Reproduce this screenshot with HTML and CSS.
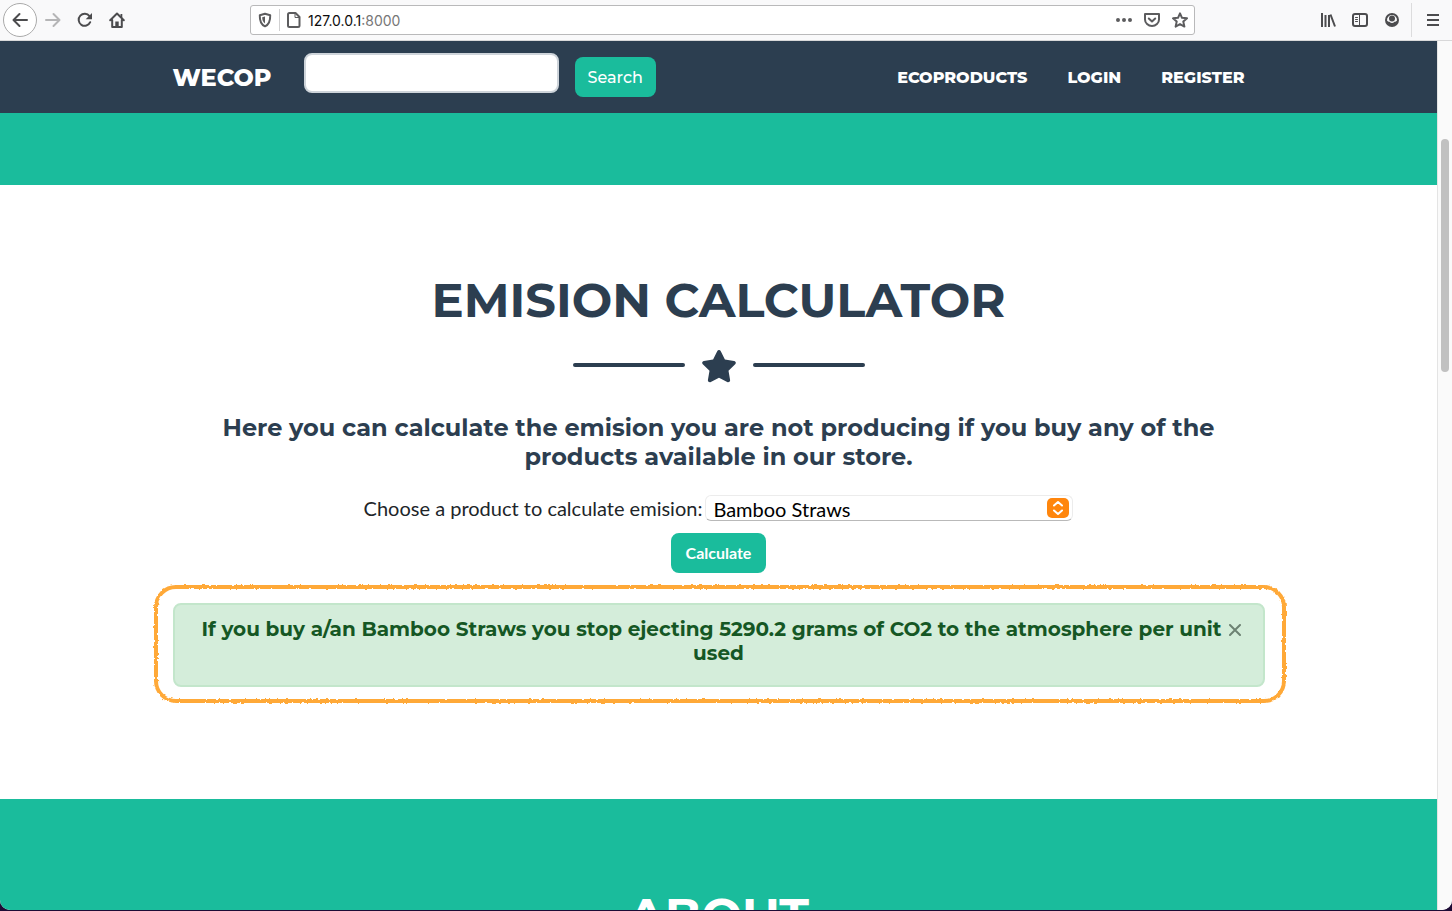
FILE: index.html
```
<!DOCTYPE html>
<html lang="en">
<head>
<meta charset="utf-8">
<meta name="viewport" content="width=device-width, initial-scale=1">
<title>WECOP</title>
<link rel="stylesheet" href="styles.css">
</head>
<body>
<div class="window">
  <header class="toolbar">
    <div class="toolbar-nav">
      <button class="tool tool-back" type="button" aria-label="Back"><svg viewBox="0 0 16 16"><path d="M15 8H2M7.500 2 1.500 8l6 6"/></svg></button>
      <button class="tool tool-dim" type="button" aria-label="Forward"><svg viewBox="0 0 16 16"><path d="M1 8h13M8.500 2l6 6-6 6"/></svg></button>
      <button class="tool" type="button" aria-label="Reload"><svg viewBox="0 0 16 16"><path d="M13.200 10.200A6 6 0 1 1 12.500 4.200"/><path class="solid" d="M15 1v6.300H8.700z"/></svg></button>
      <button class="tool" type="button" aria-label="Home"><svg viewBox="0 0 16 16"><path d="M1.200 8.300 8 1.500l6.800 6.800M3.200 8v7h9.600V8"/><path class="solid" d="M6.300 14.500V9.500h3.400v5zM11.500 2h1.800v4h-1.800z"/></svg></button>
    </div>
    <div class="address">
      <svg class="icon" viewBox="0 0 16 16" aria-hidden="true"><path d="M8 1.800 13.200 3.200C13.400 9 12 12.500 8 14.300 4 12.500 2.600 9 2.800 3.200z"/><path class="solid" d="M8 4.500v7C6 10 5.200 8.200 5.200 5.200z"/></svg>
      <span class="address-rule"></span>
      <svg class="icon" viewBox="0 0 16 16" aria-hidden="true"><path d="M3.500 1h6l4 4v8.500a1.500 1.500 0 0 1-1.500 1.500H3.500A1.500 1.500 0 0 1 2 13.500v-11A1.500 1.500 0 0 1 3.500 1z"/><path class="thin" d="M9 1v4.500h4.500"/></svg>
      <span class="address-text">127.0.0.1<span class="address-port">:8000</span></span>
      <button class="tool-small" type="button" aria-label="Page actions"><svg viewBox="0 0 16 16"><path class="solid" d="M0 8a2 2 0 1 0 4 0 2 2 0 0 0-4 0zM6 8a2 2 0 1 0 4 0 2 2 0 0 0-4 0zM12 8a2 2 0 1 0 4 0 2 2 0 0 0-4 0z"/></svg></button>
      <button class="tool-small" type="button" aria-label="Save to Pocket"><svg viewBox="0 0 16 16"><path d="M1 2h14v5.500a7 6.500 0 0 1-14 0zM4.800 6.500 8 9.500l3.200-3"/></svg></button>
      <button class="tool-small" type="button" aria-label="Bookmark"><svg viewBox="0 0 16 16"><path d="m8 1.300 2 4.500 5 .5-3.700 3.300 1.100 5L8 12.100l-4.400 2.500 1.100-5L1 6.300l5-.5z"/></svg></button>
    </div>
    <div class="toolbar-end">
      <button class="tool" type="button" aria-label="Library"><svg viewBox="0 0 16 16"><path class="flat" d="M2 1v14M5.500 3v12M9 3v12M10.500 2.500l4.500 12"/></svg></button>
      <button class="tool" type="button" aria-label="Sidebars"><svg viewBox="0 0 16 16"><rect x="1" y="2" width="14" height="12" rx="2"/><path class="thin" d="M7.500 2v12M3.500 5.500h2M3.500 7.500h2M3.500 9.500h2"/></svg></button>
      <button class="tool" type="button" aria-label="Account"><svg viewBox="0 0 16 16"><circle class="solid" cx="8" cy="8" r="7"/><path class="cut" d="M3 8.500a5 5 0 0 1 1.500-4 5 5 0 0 1 7 0 5 5 0 0 1 1.500 4c-.6.900-1.500 1.200-2.500 1.200-1.500 1.800-3.500 1.800-5 0-1 0-1.900-.3-2.500-1.200z"/><circle class="solid" cx="8" cy="6.500" r="3"/></svg></button>
      <span class="toolbar-rule"></span>
      <button class="tool" type="button" aria-label="Menu"><svg viewBox="0 0 16 16"><path class="flat" d="M2 3h12M2 8h12M2 13h12"/></svg></button>
    </div>
  </header>

  <div class="viewport">
    <div class="page">
      <nav class="navbar">
        <div class="container navbar-row">
          <a class="brand" href="#">WECOP</a>
          <form class="search">
            <input class="search-input" type="text" aria-label="Search">
            <button class="btn btn-search" type="button">Search</button>
          </form>
          <div class="nav-links">
            <a href="#">ECOPRODUCTS</a>
            <a href="#">LOGIN</a>
            <a href="#">REGISTER</a>
          </div>
        </div>
      </nav>
      <div class="masthead"></div>
      <main class="calculator">
        <div class="container">
          <h1 class="heading">EMISION CALCULATOR</h1>
          <div class="divider">
            <span class="divider-line"></span>
            <svg class="divider-star" viewBox="0 0 34 32" aria-hidden="true"><path d="M15.200 1.200c.7-1.500 2.900-1.500 3.600 0l4.100 8.400 9.200 1.300c1.700.3 2.300 2.200 1.100 3.400l-6.700 6.500 1.600 9.200c.3 1.600-1.400 2.800-2.900 2.100L17 27.800l-8.200 4.300c-1.500.7-3.200-.5-2.900-2.100l1.600-9.200-6.700-6.500c-1.200-1.200-.6-3.100 1.100-3.400l9.200-1.300z"/></svg>
            <span class="divider-line"></span>
          </div>
          <h2 class="lead">Here you can calculate the emision you are not producing if you buy any of the products available in our store.</h2>
          <form class="form">
            <div class="field">
              <label for="product">Choose a product to calculate emision:</label>
              <span class="select">
                <select id="product"><option>Bamboo Straws</option></select>
                <svg class="select-arrows" viewBox="0 0 22 20" aria-hidden="true"><path d="m7 7.500 4-3.500 4 3.500M7 12.500l4 3.500 4-3.500"/></svg>
              </span>
            </div>
            <button class="btn btn-calculate" type="button">Calculate</button>
          </form>
          <div class="alert" role="alert">
            <button class="alert-close" type="button" aria-label="Close"><svg viewBox="0 0 12 12"><path d="m1 1 10 10M11 1 1 11"/></svg></button>
            <h3 class="alert-text">If you buy a/an Bamboo Straws you stop ejecting 5290.2 grams of CO2 to the atmosphere per unit used</h3>
            <svg class="marker" aria-hidden="true">
              <filter id="rough" x="-2%" y="-10%" width="104%" height="120%"><feTurbulence type="fractalNoise" baseFrequency="0.3" numOctaves="2" seed="4"/><feDisplacementMap in="SourceGraphic" scale="3" xChannelSelector="R" yChannelSelector="G"/><feGaussianBlur stdDeviation="0.5"/></filter>
              <rect class="marker-line" x="4" y="4" rx="20" filter="url(#rough)"/>
            </svg>
          </div>
        </div>
      </main>
      <section class="about">
        <h2 class="heading">ABOUT</h2>
      </section>
    </div>
    <div class="scrollbar"><div class="scrollbar-thumb"></div></div>
  </div>
</div>
</body>
</html>
```
FILE: styles.css
```
* { box-sizing: border-box; }
body {
  margin: 0;
  height: 100vh;
  padding-bottom: 1px;
  overflow: hidden;
  background: #1d0b35;
  font-family: Lato, sans-serif;
  color: #212529;
}
h1, h2, h3 { margin: 0; }
button { padding: 0; border: 0; background: none; color: inherit; font: inherit; }
a { color: inherit; text-decoration: none; }
svg { display: block; fill: none; stroke: currentColor; stroke-width: 2; stroke-linejoin: round; stroke-linecap: round; }
.solid { fill: currentColor; stroke: none; }
.thin { stroke-width: 1; }
.flat { stroke-linecap: butt; }
.cut { fill: #f9f9fa; stroke: none; }

.window {
  height: 100%;
  display: flex;
  flex-direction: column;
  overflow: hidden;
  border-radius: 0 0 10px 10px;
  background: #fff;
}

/* Browser toolbar */
.toolbar {
  flex: none;
  display: flex;
  align-items: center;
  height: 41px;
  padding: 0 3px;
  border-bottom: 1px solid #d8d8d9;
  background: #f9f9fa;
  color: #4c4c4e;
}
.toolbar-nav { display: flex; align-items: center; flex: 247 0 0; }
.toolbar-end { display: flex; align-items: center; justify-content: flex-end; flex: 254 0 0; }
.tool { display: grid; place-items: center; width: 32px; height: 32px; }
.tool svg, .tool-small svg, .icon { width: 16px; height: 16px; }
.tool-back { width: 34px; height: 34px; border: 1px solid #aaa; border-radius: 50%; background: #fff; }
.tool-dim { color: #b5b5b6; }
.toolbar-rule { width: 1px; height: 34px; margin: 0 5px 0 3px; background: #dcdcdd; }
.address {
  flex: 931 0 0;
  display: flex;
  align-items: center;
  gap: 6px;
  height: 30px;
  padding: 0 6px;
  border: 1px solid #b9b9ba;
  border-radius: 3px;
  background: #fff;
  color: #5c5c5e;
}
.address-rule { width: 1px; height: 22px; background: #d0d0d1; }
.address-text { flex: 1; font: 14px Inter, sans-serif; color: #0c0c0d; }
.address-port { color: #777; }
.tool-small { width: 16px; margin-left: 6px; }

/* Page area */
.viewport { flex: 1; min-height: 0; display: flex; }
.page { flex: 1; min-width: 0; overflow: hidden; }
.scrollbar { width: 15px; padding: 98px 3px 0; border-left: 1px solid #e4e4e4; background: #fafafa; }
.scrollbar-thumb { width: 8px; height: 233px; border-radius: 4px; background: #c1c1c1; }
.container { max-width: 1140px; margin: 0 auto; padding: 0 24px; }
.heading, .lead, .alert-text, .navbar { font-family: Montserrat, Inter, sans-serif; font-weight: 700; }

.navbar { background: #2c3e50; color: #fff; }
.navbar-row { display: flex; align-items: center; height: 72px; }
.brand { font-size: 24px; font-weight: 800; }
.search { display: flex; align-items: flex-start; gap: 16px; margin-left: 32px; }
.search-input {
  width: 255px;
  height: 40px;
  margin-bottom: 8px;
  padding: 6px 12px;
  border: 2px solid #ced4da;
  border-radius: 8px;
  background: #fff;
  font-size: 16px;
}
.btn { height: 40px; border-radius: 8px; background: #1abc9c; color: #fff; font-size: 16px; }
.btn-search { align-self: center; padding: 0 13px; font-weight: 500; }
.nav-links { display: flex; gap: 40px; margin-left: auto; padding-right: 20px; font-size: 16px; font-weight: 800; }

.masthead { height: 72px; background: #1abc9c; }

.calculator { padding: 87px 0 112px; background: #fff; }
.heading { font-size: 48px; line-height: 56px; text-align: center; color: #2c3e50; }
.divider { display: flex; align-items: flex-start; justify-content: center; gap: 17px; margin: 21px 0 30px; }
.divider-line { width: 112px; height: 4px; margin-top: 14px; border-radius: 4px; background: #2c3e50; }
.divider-star { width: 34px; height: 34px; fill: #2c3e50; stroke: none; }
.lead { font-size: 24px; line-height: 29px; text-align: center; color: #2c3e50; }
.form { display: flex; flex-direction: column; align-items: center; gap: 12px; margin-top: 24px; font-size: 20px; }
.field { display: flex; align-items: center; gap: 3px; }
.select { position: relative; }
.select select {
  display: block;
  appearance: none;
  width: 368px;
  height: 26px;
  padding: 1px 28px 0 7px;
  border: 1px solid #ececec;
  border-bottom-color: #b9b9b9;
  border-radius: 6px;
  background: #fff;
  font: 20px/24px Lato, sans-serif;
  color: #000;
}
.select-arrows {
  position: absolute;
  top: 3px;
  right: 4px;
  width: 22px;
  height: 20px;
  border-radius: 5px;
  background: #ff860d;
  color: #fff;
  pointer-events: none;
}
.btn-calculate { padding: 0 15px 2px; font-weight: 700; }

.alert {
  position: relative;
  margin-top: 30px;
  padding: 12px 20px 20px;
  border: 2px solid #c3e6cb;
  border-radius: 8px;
  background: #d4edda;
  color: #155724;
}
.alert-text { font-size: 20px; line-height: 24px; text-align: center; }
.alert-close { float: right; display: flex; width: 14px; height: 24px; padding-top: 7px; color: #6d8273; }
.alert-close svg { width: 12px; height: 12px; }
.marker { position: absolute; top: -22px; left: -23px; width: calc(100% + 48px); height: calc(100% + 42px); overflow: visible; pointer-events: none; }
.marker-line { width: calc(100% - 8px); height: calc(100% - 8px); stroke: #ffa939; stroke-width: 4; }

.about { padding: 88px 0 96px; background: #1abc9c; }
.about .heading { color: #fff; }
```
